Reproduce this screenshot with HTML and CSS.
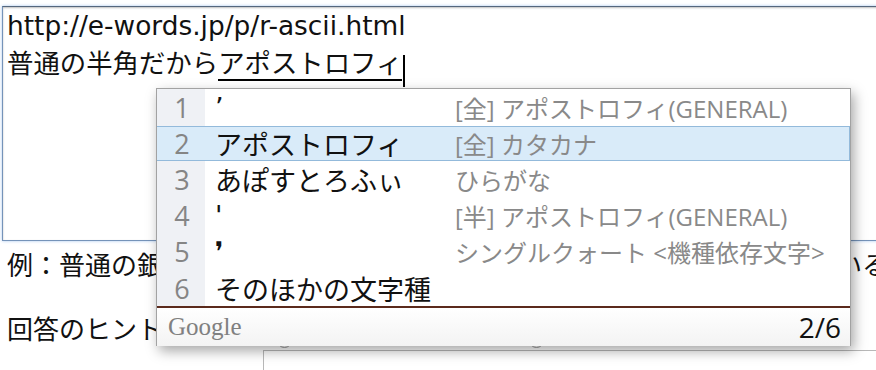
FILE: index.html
```html
<!DOCTYPE html>
<html lang="ja">
<head>
  <meta charset="UTF-8" />
  <title>IME 変換候補</title>
  <link rel="stylesheet" href="styles.css">
</head>
<body>
  <div class="editor">
    <div class="line">http://e-words.jp/p/r-ascii.html</div>
    <div class="line">普通の半角だから<span class="composing">アポストロフィ</span><span class="caret"></span></div>
  </div>

  <div class="text-row">例：普通の銀行口座の口座名義などで半角のアポストロフィが使われている</div>

  <div class="hint-row">
    <span>回答のヒント</span>
    <span class="radio first"></span>
    <span class="radio second"></span>
  </div>

  <div class="answer-box"></div>

  <div class="ime-popup">
    <div class="candidates">
      <div class="cand-row">
        <span class="num">1</span><span class="word">’</span><span class="note">[全] アポストロフィ(GENERAL)</span>
      </div>
      <div class="cand-row selected">
        <span class="num">2</span><span class="word">アポストロフィ</span><span class="note">[全] カタカナ</span>
      </div>
      <div class="cand-row">
        <span class="num">3</span><span class="word">あぽすとろふぃ</span><span class="note">ひらがな</span>
      </div>
      <div class="cand-row">
        <span class="num">4</span><span class="word">'</span><span class="note">[半] アポストロフィ(GENERAL)</span>
      </div>
      <div class="cand-row">
        <span class="num">5</span><span class="word">❜</span><span class="note">シングルクォート &lt;機種依存文字&gt;</span>
      </div>
      <div class="cand-row">
        <span class="num">6</span><span class="word">そのほかの文字種</span><span class="note"></span>
      </div>
    </div>
    <div class="ime-footer">
      <span class="brand">Google</span>
      <span class="count">2/6</span>
    </div>
  </div>
</body>
</html>
```

FILE: styles.css
```css
body {
  margin: 0;
  background: white;
  color: #111;
  font-family: "DejaVu Sans", "Noto Sans CJK JP", sans-serif;
  font-size: 26.4px;
  overflow: hidden;
  width: 876px;
  height: 370px;
  position: relative;
}
.editor {
  margin: 6px 0 0 2px;
  width: 900px;
  height: 235px;
  border: 1px solid #7593b9;
  border-top-color: #55677d;
  box-shadow: 0 0 3px #a9c8ee, inset 0 1px 2px rgba(0, 0, 0, 0.25);
  padding: 0 4px;
  box-sizing: border-box;
}
.line {
  line-height: 38px;
  white-space: nowrap;
}
.composing {
  border-bottom: 2px solid #000;
}
.caret {
  display: inline-block;
  width: 2px;
  height: 32px;
  background: #000;
  margin-left: 1px;
  vertical-align: -14px;
}
.text-row {
  margin: 6px 0 0 7px;
  font-size: 26px;
  line-height: 38px;
  white-space: nowrap;
}
.hint-row {
  display: flex;
  margin: 26px 0 0 7px;
  font-size: 26px;
  line-height: 38px;
  height: 38px;
  white-space: nowrap;
}
.radio {
  align-self: flex-end;
  width: 13px;
  height: 13px;
  border: 1px solid #9a9a9a;
  border-radius: 50%;
  margin-bottom: 1px;
}
.radio.first { margin-left: 114px; }
.radio.second { margin-left: 237px; }
.answer-box {
  margin: 1px 0 0 263px;
  height: 40px;
  border-top: 1px solid #b8b8b8;
  border-left: 1px solid #b8b8b8;
}

.ime-popup {
  position: absolute;
  left: 156px;
  top: 88px;
  width: 695px;
  height: 258px;
  box-sizing: border-box;
  border: 1px solid #a2a2a2;
  background: white;
  box-shadow: 3px 5px 12px rgba(0, 0, 0, 0.35);
  display: flex;
  flex-direction: column;
}
.candidates {
  height: 217px;
  border-bottom: 2px solid #5b2a1c;
  background: linear-gradient(to right, #eff1f5 48px, white 48px);
}
.cand-row {
  display: flex;
  align-items: center;
  height: 36.2px;
  box-sizing: border-box;
}
.cand-row.selected {
  background: #d9ebf9;
  border: 1px solid #93badb;
  border-left: 0;
  margin-top: 1px;
  height: 35.2px;
}
.num {
  width: 50px;
  text-align: center;
  color: #858585;
  font-family: "Open Sans", "Noto Sans CJK JP", sans-serif;
  font-size: 27px;
}
.word {
  width: 238px;
  padding-left: 8px;
  box-sizing: border-box;
  font-size: 27px;
  color: #111;
  white-space: nowrap;
}
.note {
  padding-left: 10px;
  color: #898989;
  font-family: "Open Sans", "Noto Sans CJK JP", sans-serif;
  font-size: 24px;
  white-space: nowrap;
}
.ime-footer {
  flex: 1;
  display: flex;
  justify-content: space-between;
  align-items: center;
  padding: 0 9px 0 11px;
  background: linear-gradient(to bottom, #ffffff, #f3f3f3);
}
.brand {
  font-family: "Liberation Serif", serif;
  font-size: 25px;
  color: #808080;
}
.count {
  font-family: "Open Sans", sans-serif;
  font-size: 28px;
  color: #111;
}
```
